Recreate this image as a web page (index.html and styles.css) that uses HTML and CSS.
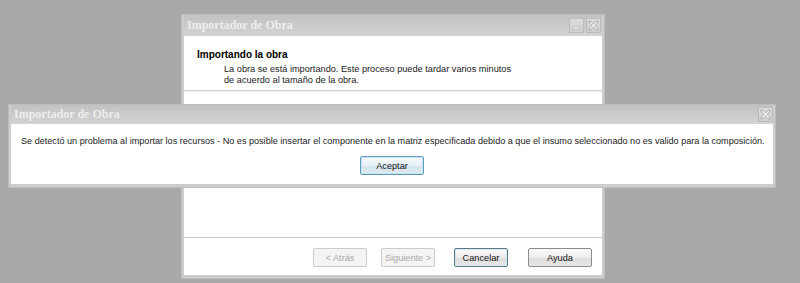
FILE: index.html
```html
<!DOCTYPE html>
<html lang="es">
<head>
  <meta charset="UTF-8" />
  <title>Importador de Obra</title>
  <link rel="stylesheet" href="styles.css">
</head>
<body>
  <div class="window wizard">
    <div class="titlebar">
      <span class="title">Importador de Obra</span>
      <span class="tb-btn">
        <svg width="15" height="15" viewBox="0 0 15 15"><rect x="4" y="9" width="6" height="2" fill="#f2f2f2" stroke="#b4b4b4" stroke-width="0.6"/></svg>
      </span>
      <span class="tb-btn">
        <svg width="15" height="15" viewBox="0 0 15 15"><path d="M4 4 L11 11 M11 4 L4 11" stroke="#b2b2b2" stroke-width="3" stroke-linecap="square"/><path d="M4 4 L11 11 M11 4 L4 11" stroke="#f0f0f0" stroke-width="1.4"/></svg>
      </span>
    </div>
    <div class="body">
      <div class="header">
        <div class="header-title">Importando la obra</div>
        <div class="header-text">La obra se está importando. Este proceso puede tardar varios minutos<br>de acuerdo al tamaño de la obra.</div>
      </div>
      <div class="content"></div>
      <div class="buttons">
        <button class="btn" disabled>&lt; Atrás</button>
        <button class="btn" disabled>Siguiente &gt;</button>
        <button class="btn btn-default spaced">Cancelar</button>
        <button class="btn btn-wide spaced-more">Ayuda</button>
      </div>
    </div>
  </div>

  <div class="window message">
    <div class="titlebar">
      <span class="title">Importador de Obra</span>
      <span class="tb-btn">
        <svg width="15" height="15" viewBox="0 0 15 15"><path d="M4 4 L11 11 M11 4 L4 11" stroke="#b2b2b2" stroke-width="3" stroke-linecap="square"/><path d="M4 4 L11 11 M11 4 L4 11" stroke="#f0f0f0" stroke-width="1.4"/></svg>
      </span>
    </div>
    <div class="body">
      <p class="msg">Se detectó un problema al importar los recursos - No es posible insertar el componente en la matriz especificada debido a que el insumo seleccionado no es valido para la composición.</p>
      <div class="msg-actions">
        <button class="btn btn-focus btn-wide">Aceptar</button>
      </div>
    </div>
  </div>
</body>
</html>
```

FILE: styles.css
```css
body {
  margin: 0;
  width: 800px;
  height: 283px;
  overflow: hidden;
  background-color: #a9a9a9;
  font-family: "Liberation Sans", Arial, sans-serif;
  font-size: 9.2px;
  color: #1a1a1a;
  position: relative;
}

.window {
  position: absolute;
  display: flex;
  flex-direction: column;
  background: #cdcdcd;
  border: 1px solid #bdbdbd;
  box-sizing: border-box;
}
.wizard {
  left: 181px;
  top: 14px;
  width: 424px;
  height: 265px;
  padding: 0 2px 3px 2px;
}
.message {
  left: 8px;
  top: 104px;
  width: 768px;
  height: 84px;
  padding: 0 2px 3px 2px;
}

.titlebar {
  display: flex;
  align-items: center;
  gap: 2px;
  height: 21px;
  padding: 0 1px 0 3px;
  background: linear-gradient(#c2c2c2, #d3d3d3);
}
.message .titlebar {
  height: 19px;
  padding-right: 0;
}
.title {
  flex: 1;
  font-family: "Liberation Serif", "Times New Roman", serif;
  font-weight: bold;
  font-size: 12px;
  color: #eeeeee;
  text-shadow: 0 0 1px #c8c8c8;
}
.tb-btn {
  display: flex;
  width: 15px;
  height: 15px;
  box-sizing: border-box;
  border: 1px solid #bcbcbc;
  background: linear-gradient(#dcdcdc, #cfcfcf);
}
.tb-btn svg {
  margin: -1px;
}

.body {
  flex: 1;
  display: flex;
  flex-direction: column;
  background: #fff;
}

.header {
  height: 55px;
  box-sizing: border-box;
  padding: 13px 0 0 13px;
  border-bottom: 1px solid #d2d2d2;
}
.header-title {
  font-weight: bold;
  font-size: 10px;
  color: #000;
  margin-bottom: 4px;
}
.header-text {
  padding-left: 27px;
  line-height: 11px;
}
.content {
  flex: 1;
  border-top: 1px solid #f0f0f0;
  border-bottom: 1px solid #cacaca;
}

.buttons {
  display: flex;
  justify-content: flex-end;
  gap: 14px;
  height: 37px;
  padding: 10px 10px 0 0;
  box-sizing: border-box;
}
.spaced {
  margin-left: 5px;
}
.spaced-more {
  margin-left: 6px;
}

.btn {
  width: 54px;
  height: 19px;
  padding: 0;
  font-family: inherit;
  font-size: 9.2px;
  color: #111;
  border: 1px solid #8c8c8c;
  border-radius: 2px;
  background: linear-gradient(#fbfbfb 0%, #ececec 50%, #dedede 51%, #e6e6e6 100%);
}
.btn-wide {
  width: 64px;
}
.btn:disabled {
  color: #a8a8a8;
  border-color: #c9ccd0;
  background: #f4f4f4;
}
.btn-default {
  border-color: #5c7a8c;
  box-shadow: inset 0 0 0 1px #d8e6ee;
}
.btn-focus {
  border-color: #5e9ab8;
  box-shadow: inset 0 0 0 1px #c9e4f2;
  background: linear-gradient(#f5fafd 0%, #e6f0f6 50%, #d4e4ee 51%, #dfeaf1 100%);
}

.msg {
  margin: 12px 0 0 10px;
  font-size: 9.1px;
  white-space: nowrap;
}
.msg-actions {
  display: flex;
  justify-content: center;
  margin-top: 10px;
}
```
